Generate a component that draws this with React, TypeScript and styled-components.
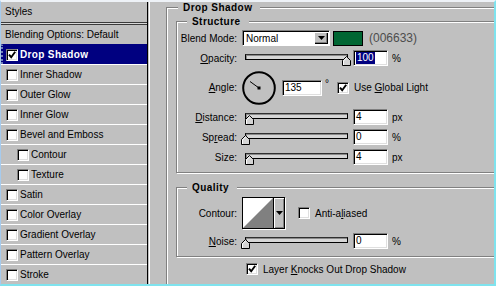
import React from 'react';
import styled, { createGlobalStyle } from 'styled-components';

const GlobalStyle = createGlobalStyle`
  html, body {
    margin: 0;
    padding: 0;
    background: #c0c0c0;
  }
  body {
    font-family: "Liberation Sans", Arial, sans-serif;
    font-size: 10px;
    color: #000;
  }
`;

const Viewport = styled.div`
  width: 496px;
  height: 286px;
  box-sizing: border-box;
  overflow: hidden;
  display: flex;
  background: #c0c0c0;
  border-top: 2px solid #eef2f7;
  border-left: 1px solid #a6cbee;
  border-right: 2px solid #7fe3ee;
  border-bottom: 2px solid #7fe3ee;
`;

/* ---------- left list ---------- */

const StylesPanel = styled.div`
  width: 147px;
  flex-shrink: 0;
  box-sizing: border-box;
  border-right: 1px solid #000;
  display: flex;
  flex-direction: column;
`;

const PanelHeader = styled.div`
  height: 20px;
  line-height: 20px;
  padding-left: 4px;
`;

const HeaderRule = styled.div`
  height: 1px;
  border-top: 1px solid #3a3a3a;
  border-bottom: 1px solid #3a3a3a;
  background: #d8d8d8;
`;

const BlendingRow = styled.div`
  height: 19px;
  line-height: 19px;
  padding-left: 4px;
`;

const StyleRow = styled.div<{ $selected?: boolean; $indent?: boolean }>`
  height: 20px;
  box-sizing: border-box;
  display: flex;
  align-items: center;
  gap: 2px;
  border-top: 1px solid ${p => (p.$selected ? '#000080' : '#fff')};
  border-left: ${p => (p.$selected ? '2px dotted #7080b8' : 'none')};
  padding-left: ${p => (p.$indent ? 16 : 5) - (p.$selected ? 2 : 0)}px;
  background: ${p => (p.$selected ? '#000080' : 'transparent')};
  color: ${p => (p.$selected ? '#fff' : '#000')};
  font-weight: ${p => (p.$selected ? 'bold' : 'normal')};
  letter-spacing: ${p => (p.$selected ? '0.35px' : '0')};
`;

/* ---------- shared controls ---------- */

const CheckBox = styled.span`
  width: 12px;
  height: 12px;
  flex-shrink: 0;
  box-sizing: border-box;
  background: #fff;
  border: 1px solid;
  border-color: #808080 #fff #fff #808080;
  box-shadow: inset 1px 1px 0 #000, inset -1px -1px 0 #dfdfdf;
  display: flex;
  align-items: center;
  justify-content: center;
`;

const Key = styled.span`
  text-decoration: underline;
  text-underline-offset: 1px;
`;

const Check = ({ on }: { on?: boolean }) => (
  <CheckBox>
    {on && (
      <svg width="8" height="8" viewBox="0 0 8 8">
        <polyline points="1,3.6 3.2,6.2 7.2,0.8" fill="none" stroke="#000" strokeWidth="1.9" />
      </svg>
    )}
  </CheckBox>
);

const DownArrow = () => (
  <svg width="7" height="4" viewBox="0 0 7 4">
    <polygon points="0,0 7,0 3.5,4" fill="#000" />
  </svg>
);

/* ---------- right panel ---------- */

const EffectPanel = styled.div`
  width: 380px;
  flex-shrink: 0;
  margin-left: 1px;
  border-left: 1px solid #fff;
  padding: 5px 0 0 16px;
`;

const GroupBox = styled.div<{ $gap?: number }>`
  position: relative;
  border: 1px solid #808080;
  box-shadow: inset 1px 1px 0 #fff, 1px 1px 0 #fff;
  margin-top: ${p => p.$gap ?? 0}px;
`;

const OuterBox = styled(GroupBox)`
  padding: 13px 0 40px 9px;
`;

const InnerBox = styled(GroupBox)<{ $pad: string }>`
  margin-right: 9px;
  padding: ${p => p.$pad};
  display: flex;
  flex-direction: column;
  gap: 4px;
`;

const Legend = styled.span<{ $left: number }>`
  position: absolute;
  top: -6px;
  left: ${p => p.$left}px;
  padding: 0 8px 0 5px;
  background: #c0c0c0;
  font-weight: bold;
  line-height: 12px;
  letter-spacing: 0.45px;
`;

const FieldRow = styled.div<{ $height?: number }>`
  display: flex;
  align-items: center;
  height: ${p => p.$height ?? 16}px;
`;

const Label = styled.span`
  width: 60px;
  margin-right: 4px;
  text-align: right;
  flex-shrink: 0;
`;

const SelectBox = styled.div`
  width: 88px;
  height: 16px;
  margin-left: 1px;
  box-sizing: border-box;
  background: #fff;
  border: 1px solid;
  border-color: #808080 #fff #fff #808080;
  box-shadow: inset 1px 1px 0 #000;
  display: flex;
  align-items: center;
  justify-content: space-between;
  padding-left: 3px;
`;

const SelectButton = styled.span`
  width: 14px;
  height: 12px;
  margin-right: 1px;
  box-sizing: border-box;
  background: #c0c0c0;
  box-shadow: inset 1px 1px 0 #fff, inset -1px -1px 0 #000, inset -2px -2px 0 #808080;
  display: flex;
  align-items: center;
  justify-content: center;
`;

const Swatch = styled.span<{ $color: string }>`
  width: 30px;
  height: 15px;
  margin-left: 3px;
  box-sizing: border-box;
  border: 1px solid #000;
  background: ${p => p.$color};
`;

const HexText = styled.span`
  margin-left: 6px;
  font-size: 12px;
  color: #4d4d4d;
`;

const NumberField = styled.div<{ $width?: number; $gap?: number }>`
  width: ${p => p.$width ?? 35}px;
  height: 16px;
  margin-left: ${p => p.$gap ?? 3}px;
  flex-shrink: 0;
  box-sizing: border-box;
  background: #fff;
  color: #000;
  border: 1px solid;
  border-color: #808080 #fff #fff #808080;
  box-shadow: inset 1px 1px 0 #000, inset -1px -1px 0 #dfdfdf;
  padding-left: 2px;
  line-height: 14px;
`;

const Selected = styled.span`
  background: #000080;
  color: #fff;
  padding: 0 1px;
  line-height: 12px;
  display: inline-block;
`;

const Unit = styled.span<{ $gap?: number }>`
  margin-left: ${p => p.$gap ?? 4}px;
`;

const Degree = styled.span`
  margin-left: 3px;
  align-self: flex-start;
  margin-top: 9px;
  line-height: 10px;
`;

const Slider = styled.div`
  position: relative;
  width: 109px;
  height: 16px;
  flex-shrink: 0;
`;

const Track = styled.div`
  height: 6px;
  margin: 4px 2px 0 4px;
  box-sizing: border-box;
  border: 1px solid #000;
  border-top-color: #303030;
  background: #d6d6d6;
  box-shadow: inset 1px 1px 0 #8a8a8a;
`;

const Thumb = styled.svg`
  position: absolute;
  top: 6px;
`;

const SliderControl = ({ value, max }: { value: number; max: number }) => (
  <Slider>
    <Track />
    <Thumb width="9" height="10" viewBox="0 0 9 10" style={{ left: `${(value / max) * 100.5}px` }}>
      <polygon points="4.5,0.5 8.5,4.5 8.5,9.5 0.5,9.5 0.5,4.5" fill="#d4d4d4" stroke="#000" />
      <polyline points="1.5,9 1.5,5 4.5,1.8" fill="none" stroke="#fff" />
    </Thumb>
  </Slider>
);

const Dial = styled.svg`
  margin-left: 1px;
  flex-shrink: 0;
`;

const CheckLabel = styled.span<{ $gap?: number }>`
  display: flex;
  align-items: center;
  margin-left: ${p => p.$gap ?? 0}px;
  gap: 5px;
`;

const ContourPicker = styled.div`
  display: flex;
  width: 43px;
  height: 32px;
  margin-left: 1px;
  box-sizing: border-box;
  border: 1px solid #000;
  box-shadow: 1px 1px 0 #fff;
`;

const ContourButton = styled.span`
  flex: 1;
  border-left: 1px solid #000;
  background: #c0c0c0;
  box-shadow: inset 1px 1px 0 #fff, inset -1px -1px 0 #808080;
  display: flex;
  align-items: center;
  justify-content: center;
`;

const KnockRow = styled.div`
  display: flex;
  align-items: center;
  height: 16px;
  margin: 4px 0 0 70px;
`;

const styleItems: { name: string; indent?: boolean; selected?: boolean; on?: boolean }[] = [
  { name: 'Drop Shadow', selected: true, on: true },
  { name: 'Inner Shadow' },
  { name: 'Outer Glow' },
  { name: 'Inner Glow' },
  { name: 'Bevel and Emboss' },
  { name: 'Contour', indent: true },
  { name: 'Texture', indent: true },
  { name: 'Satin' },
  { name: 'Color Overlay' },
  { name: 'Gradient Overlay' },
  { name: 'Pattern Overlay' },
  { name: 'Stroke' },
];

const App: React.FC = () => {
  return (
    <>
      <GlobalStyle />
      <Viewport>
        <StylesPanel>
          <PanelHeader>Styles</PanelHeader>
          <HeaderRule />
          <BlendingRow>Blending Options: Default</BlendingRow>
          {styleItems.map(item => (
            <StyleRow key={item.name} $selected={item.selected} $indent={item.indent}>
              <Check on={item.on} />
              <span>{item.name}</span>
            </StyleRow>
          ))}
        </StylesPanel>

        <EffectPanel>
          <OuterBox>
            <Legend $left={11}>Drop Shadow</Legend>

            <InnerBox $pad="8px 0 7px 0">
              <Legend $left={10}>Structure</Legend>
              <FieldRow>
                <Label>Blend Mode:</Label>
                <SelectBox>
                  <span>Normal</span>
                  <SelectButton>
                    <DownArrow />
                  </SelectButton>
                </SelectBox>
                <Swatch $color="#006633" />
                <HexText>(006633)</HexText>
              </FieldRow>
              <FieldRow>
                <Label>
                  <Key>O</Key>pacity:
                </Label>
                <SliderControl value={100} max={100} />
                <NumberField>
                  <Selected>100</Selected>
                </NumberField>
                <Unit>%</Unit>
              </FieldRow>
              <FieldRow $height={35}>
                <Label>
                  <Key>A</Key>ngle:
                </Label>
                <Dial width="34" height="34" viewBox="0 0 34 34">
                  <circle cx="17" cy="17" r="15.8" fill="none" stroke="#000" strokeWidth="2" />
                  <line x1="17" y1="17" x2="8" y2="10.5" stroke="#000" strokeWidth="1" />
                  <rect x="15.5" y="15.5" width="3" height="3" fill="#000" />
                </Dial>
                <NumberField $width={40} $gap={6}>135</NumberField>
                <Degree>°</Degree>
                <CheckLabel $gap={8}>
                  <Check on />
                  <span>
                    Use <Key>G</Key>lobal Light
                  </span>
                </CheckLabel>
              </FieldRow>
              <FieldRow>
                <Label>
                  <Key>D</Key>istance:
                </Label>
                <SliderControl value={4} max={100} />
                <NumberField>4</NumberField>
                <Unit>px</Unit>
              </FieldRow>
              <FieldRow>
                <Label>
                  Sp<Key>r</Key>ead:
                </Label>
                <SliderControl value={0} max={100} />
                <NumberField>0</NumberField>
                <Unit>%</Unit>
              </FieldRow>
              <FieldRow>
                <Label>Size:</Label>
                <SliderControl value={4} max={100} />
                <NumberField>4</NumberField>
                <Unit>px</Unit>
              </FieldRow>
            </InnerBox>

            <InnerBox $gap={14} $pad="9px 0 7px 0">
              <Legend $left={10}>Quality</Legend>
              <FieldRow $height={32}>
                <Label>Contour:</Label>
                <ContourPicker>
                  <svg width="30" height="30" viewBox="0 0 30 30">
                    <rect width="30" height="30" fill="#fff" />
                    <polygon points="0,30 30,0 30,30" fill="#808080" />
                  </svg>
                  <ContourButton>
                    <DownArrow />
                  </ContourButton>
                </ContourPicker>
                <CheckLabel $gap={13}>
                  <Check />
                  <span>
                    Anti-a<Key>l</Key>iased
                  </span>
                </CheckLabel>
              </FieldRow>
              <FieldRow>
                <Label>
                  <Key>N</Key>oise:
                </Label>
                <SliderControl value={0} max={100} />
                <NumberField>0</NumberField>
                <Unit>%</Unit>
              </FieldRow>
            </InnerBox>

            <KnockRow>
              <CheckLabel>
                <Check on />
                <span>
                  Layer <Key>K</Key>nocks Out Drop Shadow
                </span>
              </CheckLabel>
            </KnockRow>
          </OuterBox>
        </EffectPanel>
      </Viewport>
    </>
  );
};

export default App;
